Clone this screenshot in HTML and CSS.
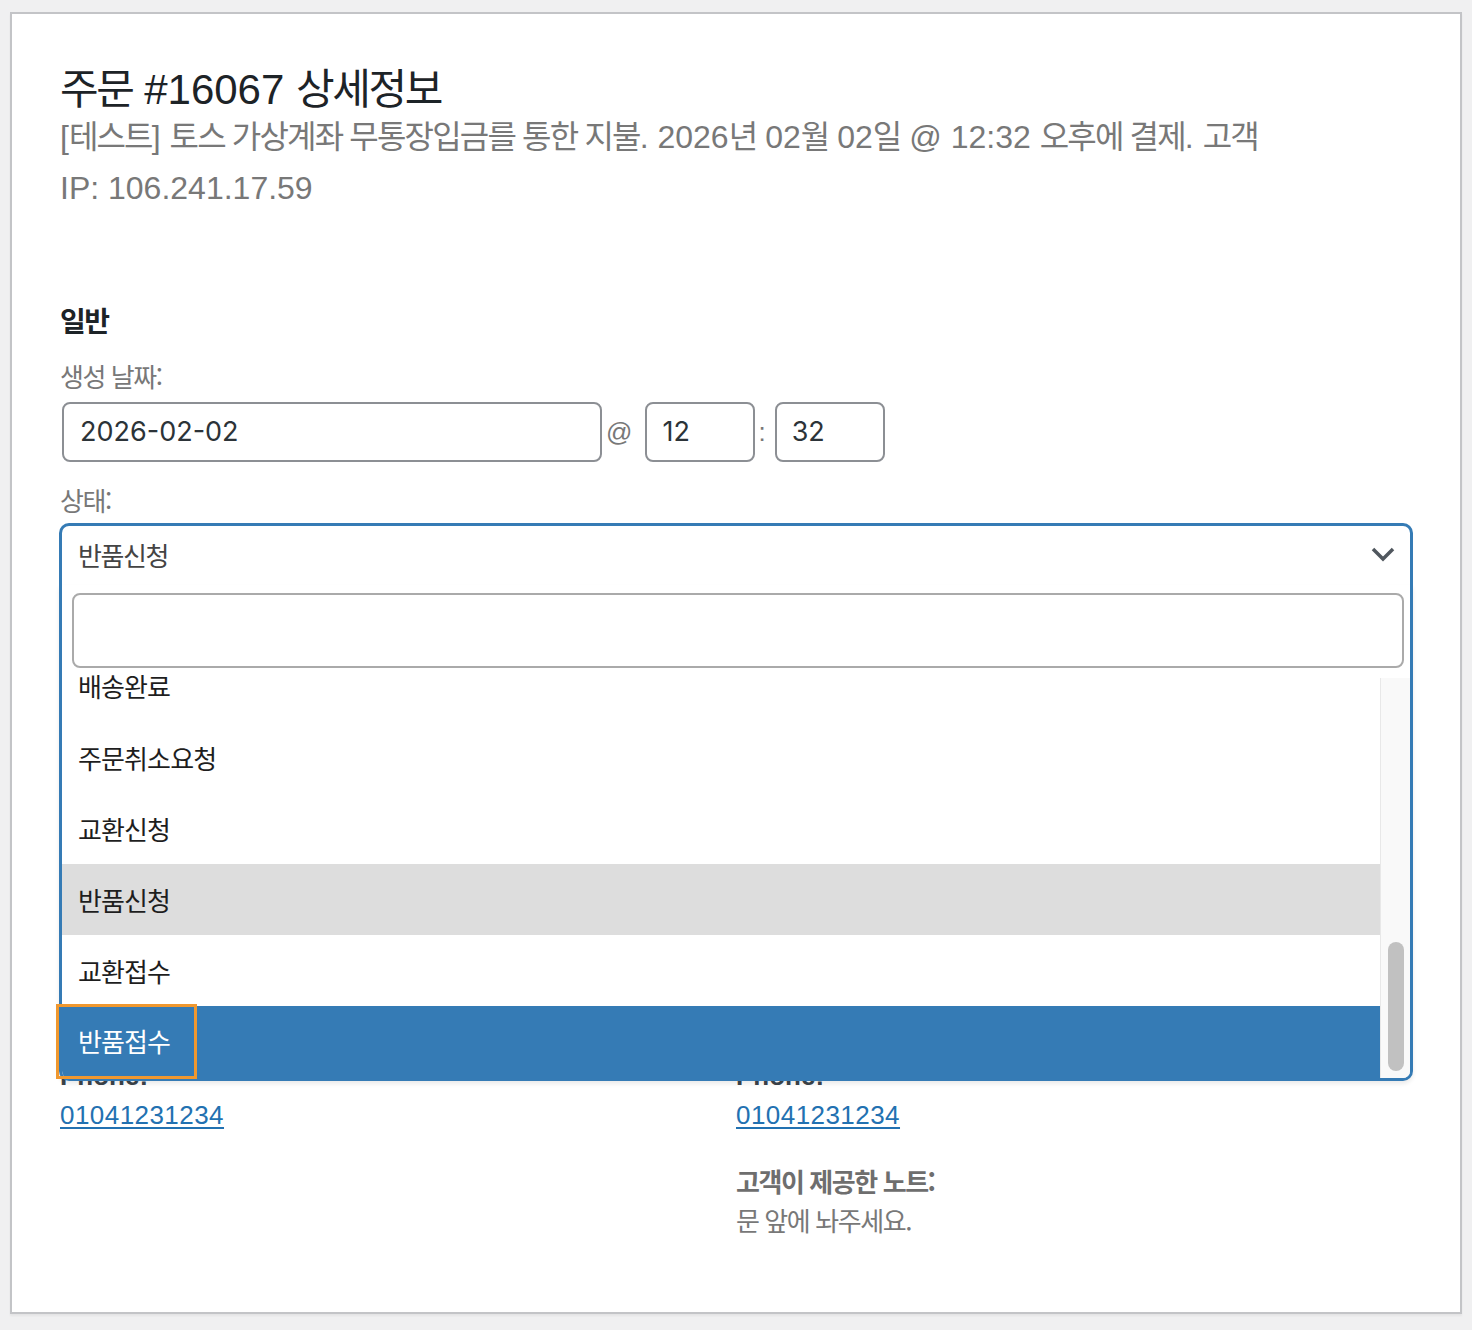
FILE: index.html
```
<!DOCTYPE html>
<html lang="ko">
<head>
<meta charset="utf-8">
<title>주문 #16067 상세정보</title>
<link rel="stylesheet" href="styles.css">
</head>
<body>
<div class="panel">
  <h2 class="title"><span class="h">주문</span> #16067 <span class="h">상세정보</span></h2>
  <p class="meta">[<span class="h">테스트</span>] <span class="h">토스 가상계좌 무통장입금를 통한 지불</span>. 2026<span class="h">년</span> 02<span class="h">월</span> 02<span class="h">일</span> @ 12:32 <span class="h">오후에 결제</span>. <span class="h">고객</span><br>IP: 106.241.17.59</p>

  <div class="general">
    <h3 class="ko section-title">일반</h3>
    <label class="ko field-label">생성 날짜:</label>
    <div class="date-row">
      <div class="input date">2026-02-02</div>
      <span class="sep at">@</span>
      <div class="input time">12</div>
      <span class="sep colon">:</span>
      <div class="input time">32</div>
    </div>
    <label class="ko field-label status-label">상태:</label>
    <div class="select2">
      <div class="selection">
        <span class="ko selected-text">반품신청</span>
        <svg class="chevron" width="24" height="16" viewBox="0 0 24 16"><polyline points="2,3 12,13 22,3" fill="none" stroke="#50575e" stroke-width="3.5"/></svg>
      </div>
      <div class="dropdown">
        <div class="search"><div class="search-field"></div></div>
        <div class="results">
          <ul class="options ko">
            <li class="option partial">배송완료</li>
            <li class="option">주문취소요청</li>
            <li class="option">교환신청</li>
            <li class="option current">반품신청</li>
            <li class="option">교환접수</li>
            <li class="option highlighted">반품접수<span class="focus-ring"></span></li>
          </ul>
          <div class="scrollbar"><div class="thumb"></div></div>
        </div>
      </div>
    </div>
  </div>

  <div class="columns">
    <div class="col">
      <p class="addr"><strong class="label">Phone:</strong><a class="tel" href="#">01041231234</a></p>
    </div>
    <div class="col">
      <p class="addr"><strong class="label">Phone:</strong><a class="tel" href="#">01041231234</a></p>
      <p class="ko note"><strong class="note-label">고객이 제공한 노트:</strong>문 앞에 놔주세요.</p>
    </div>
  </div>
</div>
</body>
</html>
```
FILE: styles.css
```
html, body {
  margin: 0;
  padding: 0;
}
body {
  background: #f0f0f1;
  padding: 12px 10px 16px 10px;
  font-family: "Liberation Sans", "Noto Sans CJK KR", sans-serif;
  box-sizing: border-box;
  height: 1330px;
}
.ko {
  font-family: "Noto Sans CJK KR", "Liberation Sans", sans-serif;
  letter-spacing: -0.055em;
}
.h {
  letter-spacing: -0.057em;
}
.panel {
  background: #fff;
  border: 2px solid #c3c4c7;
  box-shadow: 0 2px 2px rgba(0,0,0,0.05);
  height: 1302px;
  box-sizing: border-box;
  padding: 53px 48px 0 48px;
}
.title {
  margin: 0;
  font-size: 42px;
  font-weight: normal;
  line-height: 45px;
  color: #1d2327;
}
.meta {
  margin: 0;
  font-size: 32px;
  line-height: 51px;
  color: #787878;
}
.general {
  margin-top: 86px;
}
.section-title {
  margin: 0;
  font-size: 28px;
  line-height: 40px;
  font-weight: bold;
  color: #1d2327;
}
.field-label {
  display: block;
  margin-top: 18px;
  font-size: 26px;
  line-height: 36px;
  color: #787878;
}
.status-label {
  margin-top: 20px;
}
.date-row {
  display: flex;
  align-items: center;
  margin-top: 8px;
  padding-left: 2px;
}
.input {
  box-sizing: border-box;
  height: 60px;
  border: 2px solid #8c8f94;
  border-radius: 8px;
  font-family: Inter, "Liberation Sans", sans-serif;
  font-size: 27px;
  line-height: 56px;
  color: #2c3338;
  padding-left: 16px;
}
.input.date {
  width: 540px;
}
.input.time {
  width: 110px;
  padding-left: 15px;
}
.sep {
  font-size: 26px;
  color: #787878;
}
.sep.at {
  margin: 0 13px 0 4px;
}
.sep.colon {
  margin: 0 9px 0 3px;
}
.select2 {
  position: relative;
  margin-top: 5px;
  margin-left: -1px;
  width: 1354px;
}
.selection {
  box-sizing: border-box;
  height: 62px;
  border: 3px solid #357bb5;
  border-bottom: none;
  border-radius: 10px 10px 0 0;
  display: flex;
  align-items: center;
  justify-content: space-between;
  padding: 0 15px 0 16px;
}
.selected-text {
  font-size: 26px;
  line-height: 36px;
  color: #444;
  margin-top: -2px;
}
.chevron {
  display: block;
  margin-top: -3px;
}
.dropdown {
  position: absolute;
  left: 0;
  right: 0;
  top: 100%;
  background: #fff;
  border: 3px solid #357bb5;
  border-top: none;
  border-radius: 0 0 10px 10px;
  box-shadow: 0 3px 4px rgba(0,0,0,0.08);
  z-index: 10;
}
.search {
  padding: 8px 6px 10px 10px;
}
.search-field {
  box-sizing: border-box;
  height: 75px;
  border: 2px solid #aaa;
  border-radius: 8px;
  background: #fff;
}
.results {
  position: relative;
  height: 400px;
  border-radius: 0 0 7px 7px;
}
.options {
  list-style: none;
  margin: 0;
  padding: 0;
  width: 1318px;
}
.option {
  position: relative;
  height: 71px;
  line-height: 71px;
  padding-left: 16px;
  font-size: 26px;
  color: #1e1e1e;
}
.option.partial {
  height: 44px;
  line-height: 16px;
}
.option.current {
  background: #ddd;
}
.option.highlighted {
  height: 72px;
  line-height: 70px;
  background: #357bb5;
  color: #fff;
  border-bottom-left-radius: 7px;
}
.focus-ring {
  position: absolute;
  left: -6px;
  top: -2px;
  width: 141px;
  height: 75px;
  box-sizing: border-box;
  border: 3px solid #f0982f;
}
.scrollbar {
  position: absolute;
  right: 0;
  top: 0;
  width: 30px;
  height: 400px;
  box-sizing: border-box;
  background: #f9f9f9;
  border-left: 1px solid #e8e8e8;
  border-bottom-right-radius: 7px;
}
.thumb {
  position: absolute;
  left: 7px;
  top: 264px;
  width: 16px;
  height: 129px;
  border-radius: 8px;
  background: #c1c1c1;
}
.columns {
  display: grid;
  grid-template-columns: 649px 649px;
  column-gap: 27px;
  margin-top: 472px;
}
.addr, .note {
  margin: 0 0 26px 0;
  font-size: 26px;
  line-height: 39px;
  color: #787878;
}
.label {
  display: block;
  color: #3c434a;
}
.tel {
  color: #2271b1;
  text-decoration: underline;
  text-underline-offset: 3px;
  letter-spacing: 0.45px;
}
.note-label {
  display: block;
  font-weight: bold;
  color: #6e6e6e;
}
```
